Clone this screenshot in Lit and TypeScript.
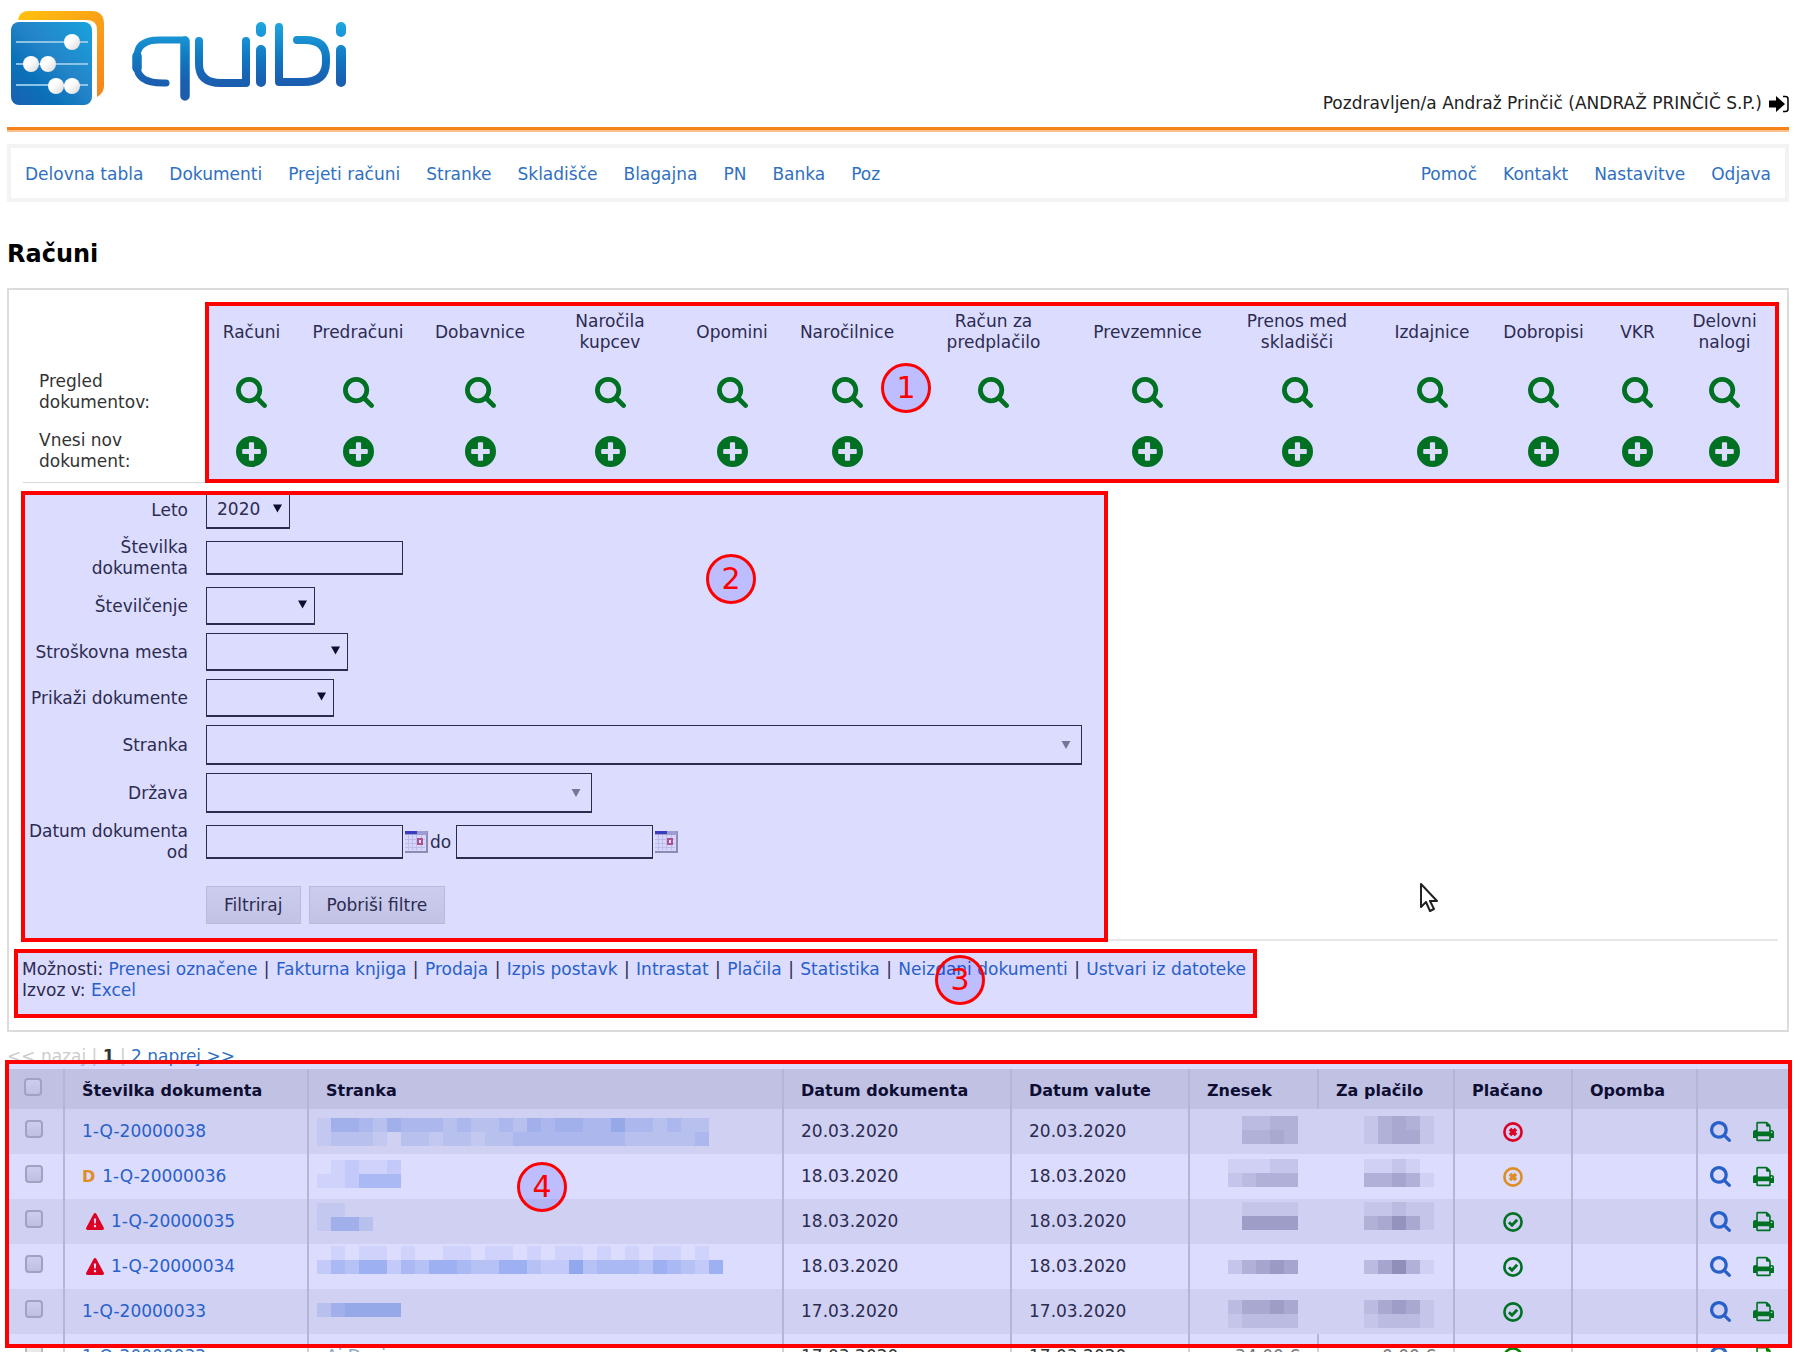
import { LitElement, html, css, svg, nothing } from "lit";
import { customElement } from "lit/decorators.js";

const SEARCH =
  "M1152 832q0-185-131.5-316.5t-316.5-131.5-316.5 131.5-131.5 316.5 131.5 316.5 316.5 131.5 316.5-131.5 131.5-316.5zm512 832q0 52-38 90t-90 38q-54 0-90-38l-343-342q-179 124-399 124-143 0-273.5-55.5t-225-150-150-225-55.5-273.5 55.5-273.5 150-225 225-150 273.5-55.5 273.5 55.5 225 150 150 225 55.5 273.5q0 220-124 399l343 343q37 37 37 90z";
const PRINT =
  "M448 1536h896v-256h-896v256zm0-640h896v-384h-160q-40 0-68-28t-28-68v-160h-640v640zm1152 64q0-26-19-45t-45-19-45 19-19 45 19 45 45 19 45-19 19-45zm128 0v416q0 13-9.5 22.5t-22.5 9.5h-224v160q0 40-28 68t-68 28h-960q-40 0-68-28t-28-68v-160h-224q-13 0-22.5-9.5t-9.5-22.5v-416q0-79 56.5-135.5t135.5-56.5h64v-544q0-40 28-68t68-28h672q40 0 88 20t76 48l152 152q28 28 48 76t20 88v256h64q79 0 135.5 56.5t56.5 135.5z";

const searchIcon = (cls: string) => html`
  <svg class=${cls} viewBox="0 128 1664 1664" aria-hidden="true"><path d=${SEARCH} fill="currentColor" /></svg>`;

const printIcon = html`
  <svg class="small print" viewBox="64 128 1664 1536" aria-hidden="true"><path d=${PRINT} fill="currentColor" /></svg>`;

const plusIcon = html`
  <svg class="big" viewBox="0 0 30 30" aria-hidden="true">
    <path fill="currentColor" fill-rule="evenodd"
      d="M15 0a15 15 0 1 0 0 30a15 15 0 1 0 0-30zM13.500 6h3a1 1 0 0 1 1 1v5.500h5.500a1 1 0 0 1 1 1v3a1 1 0 0 1-1 1h-5.500v5.500a1 1 0 0 1-1 1h-3a1 1 0 0 1-1-1v-5.500h-5.500a1 1 0 0 1-1-1v-3a1 1 0 0 1 1-1h5.500v-5.500a1 1 0 0 1 1-1z" />
  </svg>`;

const statusIcon = (kind: string) => html`
  <svg class="status ${kind}" viewBox="0 0 20 20" role="img" aria-label=${kind} fill="none" stroke="currentColor">
    <circle cx="10" cy="10" r="8.600" stroke-width="2.600" />
    ${kind === "paid"
      ? svg`<path d="M6 10.200l3 3l5.200-5.400" stroke-width="3" />`
      : svg`<path d="M7 7l6 6M13 7l-6 6" stroke-width="3.600" />`}
  </svg>`;

const warnIcon = html`
  <svg class="warn" viewBox="0 0 18 17" role="img" aria-label="Opozorilo">
    <path fill="#ff0000" fill-rule="evenodd"
      d="M9 0c.6 0 1 .3 1.300.8l7.500 14c.5 1-.1 2.200-1.300 2.200h-15c-1.200 0-1.800-1.200-1.300-2.200l7.500-14c.3-.5.7-.8 1.300-.8zM7.800 5.500l.4 5h1.600l.4-5zM7.900 12v2.300h2.200v-2.300z" />
  </svg>`;

const calendarIcon = html`
  <svg class="cal" viewBox="0 0 23 22" aria-hidden="true">
    <rect width="23" height="22" fill="#a2a2a8" />
    <rect width="22" height="4" fill="#b6b6cc" />
    <rect width="12" height="3" fill="#4646b4" />
    <rect x="0" y="4" width="21" height="16" fill="#f8f8fc" />
    <path d="M0 8.500h20M0 12.500h20M0 16.500h20M3.500 4v15M7.500 4v15M11.500 4v15M16.500 4v15" stroke="#dcdce4" />
    <rect x="13" y="8" width="4" height="5" fill="#fff" stroke="#c8607c" stroke-width="2" />
  </svg>`;

const arrow = (muted: boolean) => html`
  <svg class="arrow ${muted ? "muted" : ""}" viewBox="0 0 10 9" aria-hidden="true"><path d="M0 0h10l-5 9z" fill="currentColor" /></svg>`;

const ring = (n: number) => html`<span class="ring ring${n}">${n}</span>`;

interface DocType { name: string; width: number; create: boolean }
const doc = (name: string, width: number, create = true): DocType => ({ name, width, create });
const docTypes: DocType[] = [
  doc("Računi", 91), doc("Predračuni", 122), doc("Dobavnice", 122), doc("Naročila\nkupcev", 138),
  doc("Opomini", 106), doc("Naročilnice", 124), doc("Račun za\npredplačilo", 169, false),
  doc("Prevzemnice", 139), doc("Prenos med\nskladišči", 160), doc("Izdajnice", 110),
  doc("Dobropisi", 113), doc("VKR", 75), doc("Delovni\nnalogi", 99),
];

/* Redacted values: each digit is the strength of one block, 0 = clear. */
interface Mosaic { top: number; lines: string[] }
interface Invoice {
  id: string; mark?: "D" | "warn"; date: string; state: "unpaid" | "partial" | "paid";
  client: Mosaic | string; amount: Mosaic | string; due: Mosaic | string;
}
const invoices: Invoice[] = [
  { id: "1-Q-20000038", date: "20.03.2020", state: "unpaid",
    client: { top: 9, lines: ["1443243332322324344335332322", "1222102212212233333333222223"] },
    amount: { top: 7, lines: ["02233", "03343"] }, due: { top: 7, lines: ["13431", "13441"] } },
  { id: "1-Q-20000036", mark: "D", date: "18.03.2020", state: "partial",
    client: { top: 6, lines: ["012112", "112444"] },
    amount: { top: 5, lines: ["11122", "23444"] }, due: { top: 5, lines: ["11210", "44541"] } },
  { id: "1-Q-20000035", mark: "warn", date: "18.03.2020", state: "paid",
    client: { top: 4, lines: ["11", "1442"] },
    amount: { top: 3, lines: ["01111", "05555"] }, due: { top: 3, lines: ["11211", "34641"] } },
  { id: "1-Q-20000034", mark: "warn", date: "18.03.2020", state: "paid",
    client: { top: 2, lines: ["0101101001101101011010101101", "24355243554335532263444354325"] },
    amount: { top: 2, lines: ["00000", "24565"] }, due: { top: 2, lines: ["00000", "35741"] } },
  { id: "1-Q-20000033", date: "17.03.2020", state: "paid",
    client: { top: 0, lines: ["000000", "245555"] },
    amount: { top: 11, lines: ["24454", "12222"] }, due: { top: 11, lines: ["24541", "12221"] } },
  { id: "1-Q-20000032", date: "17.03.2020", state: "paid", client: "Ai Device", amount: "34,00 €", due: "0,00 €" },
];

const mosaic = (m: Mosaic | string, color: string, cls: string) =>
  typeof m === "string" ? html`<span class="plain">${m}</span>` : html`
  <svg class="mosaic ${cls}" role="img" aria-label="Skrito">
    ${m.lines.map((line, r) => [...line].map((d, c) => svg`
      <rect x=${c * 14} y=${m.top + r * 14} width="14" height="14" fill=${color} fill-opacity=${Number(d) * 0.07} />`))}
  </svg>`;

@customElement("app-root")
export class AppRoot extends LitElement {
  static styles = css`
    :host {
      display: block; box-sizing: border-box; height: 100vh; overflow: hidden;
      padding: 0 11px 0 7px; background: #fff; color: #333;
      font: 17px/21px "DejaVu Sans", Verdana, sans-serif;
    }
    * { box-sizing: border-box; }
    a { color: #2f70c1; text-decoration: none; }
    svg { display: block; }
    header { display: flex; justify-content: space-between; align-items: flex-end; height: 127px; }
    .logo { width: 345px; height: 110px; margin-bottom: 17px; }
    .user { display: flex; align-items: center; gap: 7px; padding-bottom: 13px; color: #222; }
    .signin { width: 20px; height: 18px; color: #000; }
    .rule { height: 5px; background: #fcc08c; border-top: 3px solid #f58218; }
    nav { display: flex; justify-content: space-between; margin-top: 12px; height: 58px; border: 4px solid #f3f3f3; padding: 2px 14px 0; align-items: center; }
    .links { display: flex; gap: 26px; }
    h1 { margin: 36px 0 0; font-size: 24px; line-height: 32px; color: #000; }
    .panel { margin-top: 18px; border: 2px solid #dbdbdb; padding: 12px 9px 29px 14px; }
    .docs, .filters, .options, .list { position: relative; }
    .docs { border-bottom: 1px solid #d8d8d8; padding: 0 4px 2px 0; }
    table { width: 100%; table-layout: fixed; border-collapse: collapse; }
    .docs th, .docs td { padding: 0; font-weight: normal; vertical-align: middle; text-align: center; }
    .docs tr { height: 60px; }
    .docs tbody tr:last-child { height: 58px; }
    .docs tbody th { text-align: left; padding: 0 60px 0 16px; }
    .docs thead th { white-space: pre; }
    .docs a { display: flex; justify-content: center; color: #008400; }
    .big { width: 31px; height: 31px; }
    .box { position: absolute; border: 4px solid #f00; background: rgba(0, 0, 255, 0.137); pointer-events: none; }
    .ring { position: absolute; width: 50px; height: 50px; border: 3px solid #f00; border-radius: 50%; background: rgba(0, 0, 255, 0.137); color: #f00; font-size: 30px; line-height: 44px; text-align: center; pointer-events: none; }
    .box1 { left: 182px; right: -1px; top: 0; bottom: -1px; }
    .ring1 { left: 858px; top: 61px; }
    .box2 { left: -2px; top: 8px; width: 1087px; bottom: -3px; }
    .ring2 { left: 683px; top: 71px; }
    .box3 { left: -8px; top: 8px; width: 1243px; height: 69px; }
    .ring3 { left: 913px; top: 14px; }
    .box4 { left: -2px; right: -3px; top: -9px; height: 288px; }
    .ring4 { left: 510px; top: 93px; }
    .filters { display: grid; gap: 8px; padding: 8px 0 15px; border-bottom: 2px solid #e8e8e8; }
    .row { display: grid; grid-template-columns: 165px 1fr; column-gap: 18px; align-items: center; min-height: 38px; }
    .row > label { text-align: right; }
    .row.two { min-height: 42px; }
    .field { display: flex; align-items: center; }
    .sel { position: relative; display: block; height: 38px; }
    .sel.tall { height: 40px; }
    input.text, select { appearance: none; margin: 0; border: 1px solid #333; border-bottom-width: 2px; border-radius: 0; background: #fff; color: #333; font: inherit; outline: none; }
    input.text { width: 197px; height: 34px; padding: 0 8px; }
    select { width: 100%; height: 100%; padding: 0 10px; }
    .w84 { width: 84px; } .w109 { width: 109px; } .w142 { width: 142px; } .w128 { width: 128px; } .w876 { width: 876px; } .w386 { width: 386px; }
    .arrow { position: absolute; right: 8px; top: 13px; width: 9px; height: 9px; color: #111; pointer-events: none; }
    .arrow.muted { right: 11px; top: 16px; width: 10px; height: 8px; color: #888; }
    .calbtn { border: 0; padding: 0; margin: 0 2px; background: none; }
    .cal { width: 23px; height: 22px; }
    .do { margin: 0 5px 0 0; }
    .actions { display: flex; gap: 8px; margin: 15px 0 0 183px; }
    .actions button { height: 38px; padding: 0 17px; border: 1px solid #d8d8d8; background: linear-gradient(#ededed, #e2e2e2); color: #333; font: inherit; }
    .options { padding-top: 18px; margin-left: -1px; }
    .sep { margin: 0 1px; }
    .pager { margin: 14px 0 2px; color: #ccc; white-space: pre; }
    .pager b { color: #333; }
    .list thead tr { background: #e0e0e0; height: 40px; }
    .list th { font-size: 16px; color: #111; text-align: left; padding: 3px 0 0 17px; }
    .list th, .list td { border-right: 2px solid #d2d2d2; white-space: nowrap; }
    .list th:last-child, .list td:last-child { border-right: 0; }
    .list td { padding: 0 0 0 17px; height: 45px; }
    .list tbody tr:nth-child(odd) { background: #f2f2f2; }
    .list td.hidden { padding: 0 0 0 8px; }
    .list td.nb { border-right-color: transparent; }
    .list td.money { padding: 0 17px 0 0; }
    .id { display: flex; align-items: center; gap: 7px; }
    .dmark { color: #ffa500; font-size: 16px; }
    .warn { width: 18px; height: 17px; margin-left: 4px; }
    .check { appearance: none; display: block; width: 18px; height: 18px; margin: 0 0 5px 1px; border: 2px solid #bbb; border-radius: 4px; background: linear-gradient(#eee, #dedede); }
    thead .check { margin: 0 0 8px 0; }
    .list .c { padding-left: 17px; }
    .mosaic { width: 100%; height: 45px; }
    .mosaic.m1 { width: 72px; margin-left: auto; }
    .plain { color: #777; }
    .list td.hidden .plain { color: #8aa9c9; padding-left: 9px; }
    .money .plain { display: block; text-align: right; }
    .status { width: 20px; height: 20px; margin: 0 auto; }
    .unpaid { color: #f00; } .partial { color: #ffa500; } .paid { color: #008400; }
    .list td.mid { padding: 0; }
    .tools { display: flex; gap: 22px; }
    .list td.last { padding-left: 12px; }
    .small { width: 21px; height: 21px; }
    .tools a:last-child { color: #008400; }
    .cursor { position: absolute; left: 1397px; top: 400px; width: 18px; height: 29px; }
  `;

  private logo() {
    return html`<svg class="logo" viewBox="0 0 345 110" role="img" aria-label="quibi">
      <defs>
        <linearGradient id="o" x1="0" y1="0" x2="1" y2="1"><stop offset="0" stop-color="#ffc20e" /><stop offset="1" stop-color="#f5821f" /></linearGradient>
        <linearGradient id="b" x1="0" y1="1" x2="1" y2="0"><stop offset="0" stop-color="#1b5fb0" /><stop offset=".3" stop-color="#0a72ba" /><stop offset=".55" stop-color="#2484c8" /><stop offset="1" stop-color="#18a3dd" /></linearGradient>
        <linearGradient id="t" gradientUnits="userSpaceOnUse" x1="0" y1="22" x2="0" y2="100"><stop offset="0" stop-color="#1fa8e0" /><stop offset=".45" stop-color="#1079c2" /><stop offset=".75" stop-color="#1a5fb0" /><stop offset="1" stop-color="#1c5cab" /></linearGradient>
        <linearGradient id="w" x1="0" y1="0" x2="1" y2="1"><stop offset=".4" stop-color="#fff" /><stop offset="1" stop-color="#d8d8d8" /></linearGradient>
      </defs>
      <path d="M11 20q1-9 11-9H84q13 0 13 13V86q0 7-7 11V30q0-10-10-10z" fill="url(#o)" />
      <rect x="4" y="22" width="81" height="83" rx="8" fill="url(#b)" />
      <path d="M9 42h72M9 64h72M9 85h72" stroke="#8cc4e8" stroke-width="2" />
      <g fill="url(#w)"><circle cx="65" cy="42" r="8" /><circle cx="24" cy="64" r="8" /><circle cx="41" cy="64" r="8" /><circle cx="49" cy="86" r="8" /><circle cx="65" cy="86" r="8" /></g>
      <g fill="none" stroke="url(#t)">
        <path d="M159 83h-3Q130 83 130 66V57Q130 40 152 40H178" stroke-width="7" stroke-linecap="round" />
        <path d="M130 68V56M178 41V96" stroke-width="9.500" stroke-linecap="round" />
        <path d="M192 41V64Q192 83 214 83H239V41" stroke-width="8" stroke-linecap="round" stroke-linejoin="round" />
        <path d="M254 50V82.010M254 27V32.010M334 50V82.010M334 27V32.010" stroke-width="10" stroke-linecap="round" />
        <path d="M272 27V82H296Q319 82 319 62V58Q319 40 298 40H290" stroke-width="8" stroke-linecap="round" stroke-linejoin="round" />
      </g>
    </svg>`;
  }

  private select(id: string, label: string, cls: string, value = "", muted = false) {
    return html`<div class="row">
      <label for=${id}>${label}</label>
      <span class="sel ${cls}"><select id=${id}><option>${value}</option></select>${arrow(muted)}</span>
    </div>`;
  }

  private invoiceRow(r: Invoice) {
    const hidden = typeof r.amount !== "string";
    return html`<tr>
      <td class="c"><input class="check" type="checkbox" aria-label=${r.id} /></td>
      <td><span class="id">${r.mark === "D" ? html`<b class="dmark">D</b>` : r.mark === "warn" ? warnIcon : nothing}<a href="#">${r.id}</a></span></td>
      <td class="hidden">${mosaic(r.client, "#2f6fd0", "m0")}</td>
      <td>${r.date}</td>
      <td>${r.date}</td>
      <td class="money ${hidden ? "nb" : ""}">${mosaic(r.amount, "#4a4a60", "m1")}</td>
      <td class="money">${mosaic(r.due, "#4a4a60", "m1")}</td>
      <td class="mid">${statusIcon(r.state)}</td>
      <td></td>
      <td class="last"><span class="tools"><a href="#" aria-label="Pregled">${searchIcon("small")}</a><a href="#" aria-label="Natisni">${printIcon}</a></span></td>
    </tr>`;
  }

  render() {
    const main = ["Delovna tabla", "Dokumenti", "Prejeti računi", "Stranke", "Skladišče", "Blagajna", "PN", "Banka", "Poz"];
    const side = ["Pomoč", "Kontakt", "Nastavitve", "Odjava"];
    const options = ["Prenesi označene", "Fakturna knjiga", "Prodaja", "Izpis postavk", "Intrastat", "Plačila", "Statistika", "Neizdani dokumenti", "Ustvari iz datoteke"];
    const cols = [57, 244, 475, 228, 178, 129, 136, 118, 125, 92];
    const heads = ["Številka dokumenta", "Stranka", "Datum dokumenta", "Datum valute", "Znesek", "Za plačilo", "Plačano", "Opomba", ""];
    return html`
      <header>
        ${this.logo()}
        <div class="user">
          <span>Pozdravljen/a Andraž Prinčič (ANDRAŽ PRINČIČ S.P.)</span>
          <svg class="signin" viewBox="0 0 20 18" aria-hidden="true"><path d="M0 5.500h7v-4.500l9 8l-9 8v-4.500h-7z" fill="currentColor" /><path d="M14 1.500h2.500q2.500 0 2.500 2.500v10q0 2.500-2.500 2.500h-2.500" fill="none" stroke="currentColor" stroke-width="1.500" /></svg>
        </div>
      </header>
      <div class="rule"></div>
      <nav>
        <div class="links">${main.map((t) => html`<a href="#">${t}</a>`)}</div>
        <div class="links">${side.map((t) => html`<a href="#">${t}</a>`)}</div>
      </nav>
      <h1>Računi</h1>
      <main class="panel">
        <section class="docs">
          <table>
            <colgroup><col style="width:183px" />${docTypes.map((d) => html`<col style="width:${d.width}px" />`)}</colgroup>
            <thead><tr><td></td>${docTypes.map((d) => html`<th scope="col">${d.name}</th>`)}</tr></thead>
            <tbody>
              <tr><th scope="row">Pregled dokumentov:</th>${docTypes.map((d) => html`<td><a href="#" aria-label="Pregled: ${d.name}">${searchIcon("big")}</a></td>`)}</tr>
              <tr><th scope="row">Vnesi nov dokument:</th>${docTypes.map((d) => html`<td>${d.create ? html`<a href="#" aria-label="Nov: ${d.name}">${plusIcon}</a>` : nothing}</td>`)}</tr>
            </tbody>
          </table>
          <div class="box box1"></div>${ring(1)}
        </section>
        <section class="filters">
          ${this.select("leto", "Leto", "w84", "2020")}
          <div class="row two"><label for="st">Številka<br />dokumenta</label><span class="field"><input class="text" id="st" type="text" /></span></div>
          ${this.select("stev", "Številčenje", "w109")}
          ${this.select("mesta", "Stroškovna mesta", "w142")}
          ${this.select("prikazi", "Prikaži dokumente", "w128")}
          ${this.select("stranka", "Stranka", "tall w876", "", true)}
          ${this.select("drzava", "Država", "tall w386", "", true)}
          <div class="row two">
            <label for="od">Datum dokumenta od</label>
            <span class="field">
              <input class="text" id="od" type="text" />
              <button class="calbtn" type="button" aria-label="Izberi datum od">${calendarIcon}</button>
              <label class="do" for="do">do</label>
              <input class="text" id="do" type="text" />
              <button class="calbtn" type="button" aria-label="Izberi datum do">${calendarIcon}</button>
            </span>
          </div>
          <div class="actions"><button type="button">Filtriraj</button><button type="button">Pobriši filtre</button></div>
          <div class="box box2"></div>${ring(2)}
          <svg class="cursor" viewBox="0 0 18 29" aria-hidden="true"><path d="M1 1v23l5-5l4 9l4-2l-4-8h7z" fill="#fff" stroke="#222" stroke-width="2" stroke-linejoin="round" /></svg>
        </section>
        <section class="options">
          <div>Možnosti: ${options.map((t, i) => html`${i ? html` <span class="sep">|</span> ` : ""}<a href="#">${t}</a>`)}</div>
          <div>Izvoz v: <a href="#">Excel</a></div>
          <div class="box box3"></div>${ring(3)}
        </section>
      </main>
      <div class="pager">&lt;&lt; nazaj | <b>1</b> | <a href="#">2</a> <a href="#">naprej &gt;&gt;</a></div>
      <section class="list">
        <table>
          <colgroup>${cols.map((w) => html`<col style="width:${w}px" />`)}</colgroup>
          <thead><tr><th class="c"><input class="check" type="checkbox" aria-label="Označi vse" /></th>${heads.map((h) => html`<th scope="col">${h}</th>`)}</tr></thead>
          <tbody>${invoices.map((r) => this.invoiceRow(r))}</tbody>
        </table>
        <div class="box box4"></div>${ring(4)}
      </section>
    `;
  }
}
